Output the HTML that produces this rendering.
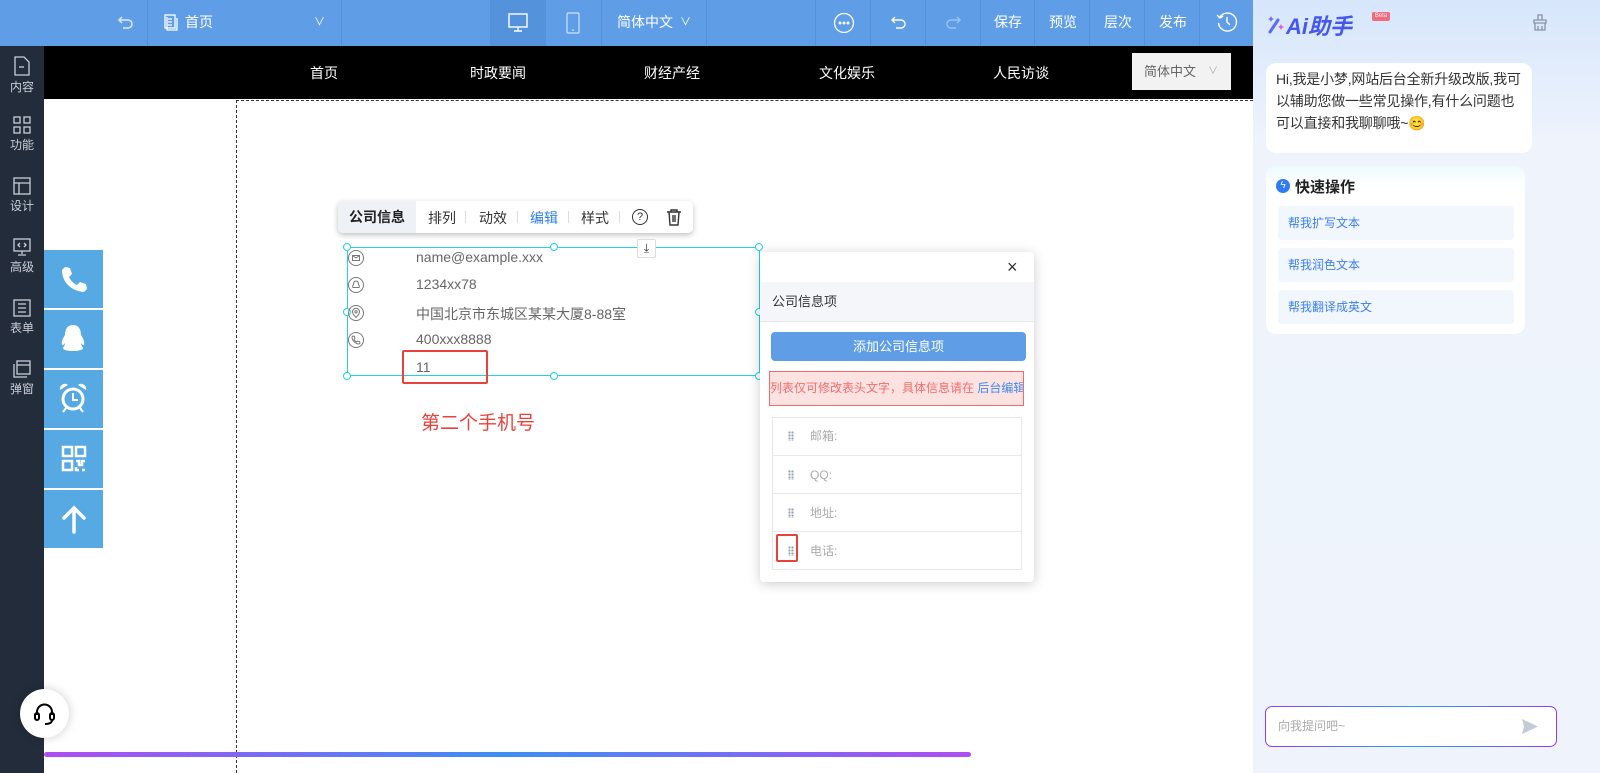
<!DOCTYPE html>
<html><head><meta charset="utf-8"><style>
*{box-sizing:border-box;margin:0;padding:0}
body{width:1600px;height:773px;overflow:hidden;position:relative;background:#fff;font-family:"Liberation Sans","Noto Sans CJK SC",sans-serif;font-size:13px;color:#333}
.abs{position:absolute}
#top{left:0;top:0;width:1253px;height:46px;background:#5f9ee6;color:#fff}
.sep{position:absolute;top:0;width:1px;height:46px;background:#5590d8}
.tt{position:absolute;top:0;line-height:44px;font-size:14px;color:#fff}
#side{left:0;top:46px;width:44px;height:727px;background:#232c3b}
.si{position:absolute;left:0;width:44px;text-align:center;color:#c9ced6;font-size:12px}
.si svg{display:block;margin:0 auto 2px}
#nav{left:44px;top:46px;width:1209px;height:53px;background:#000}
.nv{position:absolute;top:17px;color:#fff;font-size:14px}
#rp{left:1253px;top:0;width:347px;height:773px;background:linear-gradient(180deg,#d6e6fb 0,#eef3fc 140px,#eff4fc 100%)}
.fb{position:absolute;left:44px;width:59px;height:58px;background:#57a9e4}
.row{position:absolute;left:416px;font-size:14px;color:#666}
.ic{position:absolute;left:348px}
.h{position:absolute;width:8px;height:8px;border:1px solid #1ed4e6;border-radius:50%;background:#fff}
.li{position:absolute;left:12px;width:250px;height:38px;border-top:1px solid #e6e8ec;color:#aaa;font-size:12px;line-height:38px;padding-left:38px}
.dots{position:absolute;left:16px;top:14px;width:6px;height:10px;background:radial-gradient(circle,#9aa2ad 1px,transparent 1.3px) 0 0/3px 3px}
.qa{position:absolute;left:12px;width:236px;height:34px;background:#f2f6fd;border-radius:4px;color:#3b7ff0;font-size:12px;line-height:34px;padding-left:10px}
</style></head><body>
<div id="top" class="abs">
 <svg class="abs" style="left:117px;top:13px" width="18" height="18" viewBox="0 0 18 18" fill="none" stroke="#dce9fb" stroke-width="1.5"><path d="M5 4L2 7l3 3M2 7h9a4 4 0 010 8H6"/></svg>
 <div class="sep" style="left:147px"></div>
 <svg class="abs" style="left:164px;top:14px" width="14" height="17" viewBox="0 0 14 17" fill="none" stroke="#fff" stroke-width="1.3"><rect x="1" y="1" width="10" height="13"/><path d="M3 3v13h10V4M4 5h4M4 8h4M4 11h4"/></svg>
 <div class="tt" style="left:185px">首页</div>
 <div class="tt" style="left:314px;font-size:11px">&#8744;</div>
 <div class="sep" style="left:341px"></div>
 <div class="abs" style="left:490px;top:0;width:56px;height:46px;background:#5592dc"></div>
 <svg class="abs" style="left:507px;top:13px" width="22" height="20" viewBox="0 0 22 20" fill="none" stroke="#fff" stroke-width="1.4"><rect x="2" y="1" width="18" height="13"/><path d="M11 14v4M7 18h8"/></svg>
 <svg class="abs" style="left:566px;top:12px" width="14" height="22" viewBox="0 0 14 22" fill="none" stroke="#cfe0f7" stroke-width="1.2"><rect x="1" y="1" width="12" height="20" rx="1"/><path d="M6 18h2"/></svg>
 <div class="sep" style="left:601px"></div>
 <div class="tt" style="left:617px">简体中文</div>
 <div class="tt" style="left:680px;font-size:11px">&#8744;</div>
 <div class="sep" style="left:706px"></div>
 <div class="sep" style="left:815px"></div>
 <svg class="abs" style="left:833px;top:12px" width="22" height="22" viewBox="0 0 22 22" fill="none" stroke="#fff" stroke-width="1.3"><circle cx="11" cy="11" r="9.5"/><circle cx="7" cy="11" r=".8" fill="#fff"/><circle cx="11" cy="11" r=".8" fill="#fff"/><circle cx="15" cy="11" r=".8" fill="#fff"/></svg>
 <div class="sep" style="left:870px"></div>
 <svg class="abs" style="left:890px;top:13px" width="18" height="18" viewBox="0 0 18 18" fill="none" stroke="#fff" stroke-width="1.4"><path d="M5 4L2 7l3 3M2 7h9a4 4 0 010 8H6"/></svg>
 <div class="sep" style="left:925px"></div>
 <svg class="abs" style="left:944px;top:13px" width="18" height="18" viewBox="0 0 18 18" fill="none" stroke="#9cc2f0" stroke-width="1.4"><path d="M13 4l3 3-3 3M16 7H7a4 4 0 000 8h5"/></svg>
 <div class="sep" style="left:980px"></div>
 <div class="tt" style="left:994px">保存</div>
 <div class="sep" style="left:1034px"></div>
 <div class="tt" style="left:1049px">预览</div>
 <div class="sep" style="left:1089px"></div>
 <div class="tt" style="left:1104px">层次</div>
 <div class="sep" style="left:1144px"></div>
 <div class="tt" style="left:1159px">发布</div>
 <div class="sep" style="left:1199px"></div>
 <svg class="abs" style="left:1216px;top:11px" width="22" height="22" viewBox="0 0 22 22" fill="none" stroke="#fff" stroke-width="1.4"><path d="M4 6A9 9 0 1 1 2.5 12"/><path d="M1 4l3 3 3-2M11 6v5l3 3"/></svg>
</div>
<div id="side" class="abs">
 <div class="si" style="top:10px"><svg width="18" height="20" viewBox="0 0 18 20" fill="none" stroke="#c9ced6" stroke-width="1.3"><path d="M2 1h9l5 5v13H2z"/><path d="M6 11h5"/></svg>内容</div>
 <div class="si" style="top:70px"><svg width="18" height="18" viewBox="0 0 18 18" fill="none" stroke="#c9ced6" stroke-width="1.3"><rect x="1" y="1" width="6" height="6"/><rect x="11" y="1" width="6" height="6"/><rect x="1" y="11" width="6" height="6"/><rect x="11" y="11" width="6" height="6"/></svg>功能</div>
 <div class="si" style="top:131px"><svg width="18" height="18" viewBox="0 0 18 18" fill="none" stroke="#c9ced6" stroke-width="1.3"><rect x="1" y="1" width="16" height="16"/><path d="M1 6h16M6 6v11"/></svg>设计</div>
 <div class="si" style="top:192px"><svg width="18" height="18" viewBox="0 0 18 18" fill="none" stroke="#c9ced6" stroke-width="1.3"><rect x="1" y="1" width="16" height="12"/><path d="M9 13v3M5 17h8M7 5L5 7l2 2M11 5l2 2-2 2"/></svg>高级</div>
 <div class="si" style="top:253px"><svg width="18" height="18" viewBox="0 0 18 18" fill="none" stroke="#c9ced6" stroke-width="1.3"><rect x="1" y="1" width="16" height="16"/><path d="M5 5h8M5 9h8M5 13h8"/></svg>表单</div>
 <div class="si" style="top:314px"><svg width="18" height="18" viewBox="0 0 18 18" fill="none" stroke="#c9ced6" stroke-width="1.3"><rect x="4" y="1" width="13" height="13"/><path d="M4 5h13M1 4v13h13"/></svg>弹窗</div>
</div>
<div id="nav" class="abs">
 <div class="nv" style="left:266px">首页</div>
 <div class="nv" style="left:426px">时政要闻</div>
 <div class="nv" style="left:600px">财经产经</div>
 <div class="nv" style="left:775px">文化娱乐</div>
 <div class="nv" style="left:949px">人民访谈</div>
 <div class="abs" style="left:1088px;top:7px;width:99px;height:37px;background:#f2f2f2;color:#666;font-size:13px;line-height:37px;padding-left:12px">简体中文<span style="position:absolute;left:76px;color:#aaa;font-size:10px">&#8744;</span></div>
</div>
<div class="abs" style="left:236px;top:100px;width:1017px;height:673px;border-left:1px dashed #333;border-top:1px dashed #333"></div>
<div class="fb" style="top:250px"><svg style="margin:14px 15px" width="30" height="30" viewBox="0 0 30 30"><path d="M6 3l5 1 2 6-3 3c2 4 4 6 8 8l3-3 6 2 1 5-3 3C12 27 3 18 3 6z" fill="#fff"/></svg></div>
<div class="fb" style="top:310px"><svg style="margin:13px 14px" width="30" height="32" viewBox="0 0 30 32"><path d="M15 2c6 0 8 5 8 10 2 3 4 7 3 10-2 0-3-2-3-2 0 3 2 4 2 5 0 2-5 3-10 3S5 27 5 25c0-1 2-2 2-5 0 0-1 2-3 2-1-3 1-7 3-10 0-5 2-10 8-10z" fill="#fff"/></svg></div>
<div class="fb" style="top:370px"><svg style="margin:12px 14px" width="30" height="32" viewBox="0 0 30 32"><circle cx="15" cy="17" r="10" fill="none" stroke="#fff" stroke-width="3"/><path d="M15 11v7h5" stroke="#fff" stroke-width="2" fill="none"/><path d="M2 8a5 5 0 018-5zM28 8a5 5 0 00-8-5z" fill="#fff"/><path d="M8 26l-3 4M22 26l3 4" stroke="#fff" stroke-width="2"/></svg></div>
<div class="fb" style="top:430px"><svg style="margin:15px 17px" width="26" height="28" viewBox="0 0 26 28" fill="none" stroke="#fff" stroke-width="2.5"><rect x="2" y="2" width="9" height="9"/><rect x="15" y="2" width="9" height="9"/><rect x="2" y="16" width="9" height="9"/><path d="M15 16h3v4h3v-4h3M15 22v3h3M21 25h3"/></svg></div>
<div class="fb" style="top:490px"><svg style="margin:14px 16px" width="28" height="30" viewBox="0 0 28 30" fill="none" stroke="#fff" stroke-width="3.5" stroke-linecap="round"><path d="M14 28V4M4 14L14 4l10 10"/></svg></div>
<div class="abs" style="left:20px;top:689px;width:49px;height:49px;border-radius:50%;background:#fff;box-shadow:0 0 10px rgba(0,0,0,.2)"><svg style="margin:12px" width="25" height="25" viewBox="0 0 25 25" fill="none" stroke="#000" stroke-width="2"><path d="M5 14V11a7.5 7.5 0 0115 0v3"/><rect x="3" y="12" width="4" height="7" rx="2"/><rect x="18" y="12" width="4" height="7" rx="2"/><path d="M20 19c0 3-3 4-7 4"/></svg></div>
<div class="abs" style="left:44px;top:752px;width:927px;height:5px;border-radius:3px;background:linear-gradient(90deg,#b04cf6,#3d8ef8 50%,#b04cf6)"></div>

<div class="abs" style="left:338px;top:201px;width:355px;height:32px;background:#fff;border-radius:5px;box-shadow:0 2px 6px rgba(0,0,0,.25)">
 <div class="abs" style="left:0;top:0;width:78px;height:32px;background:#eef1f6;border-radius:5px 0 0 5px;font-weight:bold;color:#222;line-height:32px;text-align:center;font-size:14px">公司信息</div>
 <div class="abs" style="left:90px;top:7px;font-size:14px;color:#333">排列</div>
 <div class="abs" style="left:127px;top:10px;width:1px;height:12px;background:#ddd"></div>
 <div class="abs" style="left:141px;top:7px;font-size:14px;color:#333">动效</div>
 <div class="abs" style="left:179px;top:10px;width:1px;height:12px;background:#ddd"></div>
 <div class="abs" style="left:192px;top:7px;font-size:14px;color:#2d7ff0">编辑</div>
 <div class="abs" style="left:230px;top:10px;width:1px;height:12px;background:#ddd"></div>
 <div class="abs" style="left:243px;top:7px;font-size:14px;color:#333">样式</div>
 <div class="abs" style="left:281px;top:10px;width:1px;height:12px;background:#ddd"></div>
 <div class="abs" style="left:294px;top:8px;width:16px;height:16px;border:1.4px solid #333;border-radius:50%;font-size:11px;text-align:center;line-height:14px;color:#333">?</div>
 <svg class="abs" style="left:328px;top:7px" width="16" height="18" viewBox="0 0 16 18" fill="none" stroke="#333" stroke-width="1.4"><path d="M1 4h14M5 4V2h6v2M3 4l1 13h8l1-13M7 7v7M9 7v7"/></svg>
</div>
<div class="abs" style="left:347px;top:247px;width:413px;height:129px;border:1px solid #22d3e6"></div>
<div class="h" style="left:343px;top:243px"></div><div class="h" style="left:550px;top:243px"></div><div class="h" style="left:755px;top:243px"></div>
<div class="h" style="left:343px;top:308px"></div><div class="h" style="left:755px;top:308px"></div>
<div class="h" style="left:343px;top:372px"></div><div class="h" style="left:550px;top:372px"></div><div class="h" style="left:755px;top:372px"></div>
<div class="abs" style="left:637px;top:239px;width:19px;height:19px;background:#fff;border:1px solid #ddd;border-radius:2px;font-size:12px;text-align:center;line-height:17px;color:#333">⤓</div>
<svg class="ic" style="top:250px" width="16" height="16" viewBox="0 0 16 16" fill="none" stroke="#777" stroke-width="1"><circle cx="8" cy="8" r="7.5"/><rect x="4.5" y="5.5" width="7" height="5"/><path d="M4.5 5.5L8 8l3.5-2.5"/></svg>
<div class="row" style="top:249px">name@example.xxx</div>
<svg class="ic" style="top:277px" width="16" height="16" viewBox="0 0 16 16" fill="none" stroke="#777" stroke-width="1"><circle cx="8" cy="8" r="7.5"/><path d="M8 4c2 0 2.5 2 2.5 3.5 1 1 1 2.5 .5 3H5c-.5-.5-.5-2 .5-3C5.5 6 6 4 8 4z"/></svg>
<div class="row" style="top:276px">1234xx78</div>
<svg class="ic" style="top:305px" width="16" height="16" viewBox="0 0 16 16" fill="none" stroke="#777" stroke-width="1"><circle cx="8" cy="8" r="7.5"/><path d="M8 12.5S4.5 9 4.5 6.8a3.5 3.5 0 017 0C11.5 9 8 12.5 8 12.5z"/><circle cx="8" cy="6.8" r="1.2"/></svg>
<div class="row" style="top:304px">中国北京市东城区某某大厦8-88室</div>
<svg class="ic" style="top:332px" width="16" height="16" viewBox="0 0 16 16" fill="none" stroke="#777" stroke-width="1"><circle cx="8" cy="8" r="7.5"/><path d="M5 4l1.5.5.5 2-1 1c.7 1.3 1.3 2 2.5 2.5l1-1 2 .5.5 1.5-1 1C7.5 12 4 8.5 4 5z"/></svg>
<div class="row" style="top:331px">400xxx8888</div>
<div class="row" style="top:359px">11</div>
<div class="abs" style="left:402px;top:350px;width:86px;height:34px;border:2px solid #e8433a;border-radius:2px"></div>
<div class="abs" style="left:421px;top:408px;font-size:19px;color:#e8433a">第二个手机号</div>

<div class="abs" style="left:760px;top:252px;width:274px;height:330px;background:#fff;border-radius:4px;box-shadow:0 2px 12px rgba(0,0,0,.2)">
 <div class="abs" style="left:247px;top:5px;font-size:18px;color:#333">×</div>
 <div class="abs" style="left:0;top:30px;width:274px;height:40px;background:#f4f6f9;border-bottom:1px solid #e6e8ec;line-height:40px;padding-left:12px;color:#333">公司信息项</div>
 <div class="abs" style="left:11px;top:80px;width:255px;height:29px;background:#5f9ee6;border-radius:4px;color:#fff;text-align:center;line-height:29px">添加公司信息项</div>
 <div class="abs" style="left:9px;top:119px;width:255px;height:35px;background:#fde2e2;border:1px solid #f16b6b;color:#f56c6c;font-size:12px;line-height:33px;white-space:nowrap;overflow:hidden">列表仅可修改表头文字，具体信息请在 <span style="color:#3f8cf2">后台编辑</span></div>
 <div class="abs" style="left:12px;top:165px;width:250px;height:153px;border:1px solid #e6e8ec"></div>
 <div class="li" style="top:165px;border-top:0"><span class="dots"></span>邮箱:</div>
 <div class="li" style="top:203px"><span class="dots"></span>QQ:</div>
 <div class="li" style="top:241px"><span class="dots"></span>地址:</div>
 <div class="li" style="top:279px"><span class="dots"></span>电话:</div>
 <div class="abs" style="left:16px;top:282px;width:22px;height:28px;border:2px solid #e8433a;border-radius:2px"></div>
</div>

<div id="rp" class="abs">
 <svg class="abs" style="left:14px;top:14px" width="18" height="20" viewBox="0 0 18 20"><path d="M3 18L11 6" stroke="#5b6cf5" stroke-width="3" stroke-linecap="round"/><path d="M4 2l1 2 2 1-2 1-1 2-1-2-2-1 2-1z" fill="#7a6bf5"/><path d="M14 10l1 2 2 1-2 1-1 2-1-2-2-1 2-1z" fill="#e35dd6"/></svg>
 <div class="abs" style="left:33px;top:9px;font-size:22px;font-weight:bold;font-style:italic;color:#4457f0">Ai助手</div>
 <div class="abs" style="left:119px;top:12px;width:18px;height:9px;background:#f26a7c;border-radius:2px;font-size:6px;color:#fff;text-align:center;line-height:9px">Beta</div>
 <svg class="abs" style="left:279px;top:14px" width="16" height="17" viewBox="0 0 16 17" fill="none" stroke="#8a93a8" stroke-width="1.3"><path d="M6 1h4v5H6zM2 6h12v3H2zM3 9v7h10V9M6 12v4M10 12v4"/></svg>
 <div class="abs" style="left:13px;top:63px;width:266px;height:90px;background:#fff;border-radius:10px;padding:5px 4px 0 10px;font-size:14px;line-height:22px;color:#333;letter-spacing:-0.2px">Hi,我是小梦,网站后台全新升级改版,我可以辅助您做一些常见操作,有什么问题也可以直接和我聊聊哦~<span style="color:#f5b400">😊</span></div>
 <div class="abs" style="left:13px;top:166px;width:259px;height:168px;background:linear-gradient(#eefbff,#fff 20px);border-radius:10px">
  <div class="abs" style="left:10px;top:13px;width:14px;height:14px;border-radius:50%;background:#2f7bf2;color:#fff;font-size:10px;text-align:center;line-height:14px">ϟ</div>
  <div class="abs" style="left:29px;top:10px;font-size:15px;font-weight:bold;color:#222">快速操作</div>
  <div class="qa" style="top:40px">帮我扩写文本</div>
  <div class="qa" style="top:82px">帮我润色文本</div>
  <div class="qa" style="top:124px">帮我翻译成英文</div>
 </div>
 <div class="abs" style="left:12px;top:706px;width:292px;height:41px;border-radius:7px;background:linear-gradient(#fff,#fff) padding-box,linear-gradient(90deg,#8c3cf5,#2ba0f2,#8c3cf5) border-box;border:1.5px solid transparent;font-size:12px;color:#aaa;line-height:38px;padding-left:12px">向我提问吧~
  <svg class="abs" style="left:256px;top:12px" width="16" height="15" viewBox="0 0 16 15"><path d="M0 0l16 7.5L0 15l2-7.5z" fill="#c5cbd6"/></svg></div>
</div>
</body></html>
